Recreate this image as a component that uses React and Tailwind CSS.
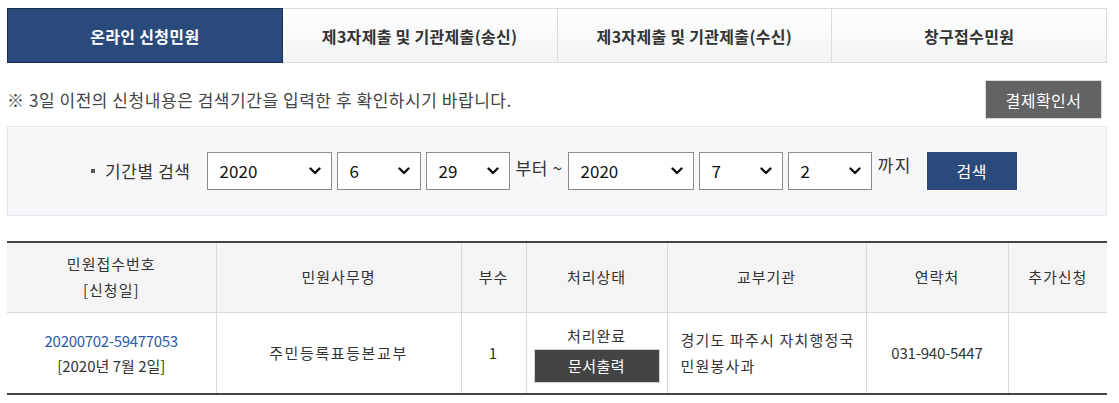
import React from "react";

const tabs = ["온라인 신청민원", "제3자제출 및 기관제출(송신)", "제3자제출 및 기관제출(수신)", "창구접수민원"];

const Chevron = () => (
    <svg className="absolute right-[10px] top-1/2 -translate-y-1/2 pointer-events-none" width="12" height="8" viewBox="0 0 12 8">
        <path d="M1.5 1.5 L6 6 L10.5 1.5" fill="none" stroke="#111" strokeWidth="2.4" strokeLinecap="round" strokeLinejoin="round" />
    </svg>
);

const DateSelect = ({ value, options, width }) => (
    <div className={`relative h-[38px] border border-[#8c8c8c] bg-white ${width}`}>
        <select
            defaultValue={value}
            className="appearance-none w-full h-full pl-[12px] pr-[28px] bg-transparent text-[17px] text-[#111] outline-none"
        >
            {options.map((o) => (
                <option key={o} value={o}>{o}</option>
            ))}
        </select>
        <Chevron />
    </div>
);

const years = ["2018", "2019", "2020"];
const months = Array.from({ length: 12 }, (_, i) => String(i + 1));
const days = Array.from({ length: 31 }, (_, i) => String(i + 1));

const App = () => {
    return (
        <div className="w-[1119px] h-[403px] bg-white text-[#333] overflow-hidden" style={{ fontFamily: '"Noto Sans CJK KR", "Noto Sans", sans-serif' }}>
            <div className="ml-[7px] w-[1100px] pt-[8px]">

                {/* tabs */}
                <div className="flex h-[55px]">
                    {tabs.map((t, i) => (
                        <div
                            key={t}
                            className={
                                i === 0
                                    ? "flex-1 flex items-center justify-center bg-[#2a4a7c] border border-[#1b2f52] text-white text-[16px] font-bold tracking-[0.3px]"
                                    : "flex-1 flex items-center justify-center bg-gradient-to-b from-white to-[#f2f3f4] border border-l-0 border-[#dcdcdc] text-[#333] text-[16px] font-bold tracking-[0.3px]"
                            }
                        >
                            {t}
                        </div>
                    ))}
                </div>

                {/* notice */}
                <div className="flex items-center justify-between mt-[17px] h-[39px]">
                    <p className="text-[17px] tracking-[0.55px] text-[#444] leading-[20px]">※ 3일 이전의 신청내용은 검색기간을 입력한 후 확인하시기 바랍니다.</p>
                    <button className="mr-[5px] w-[117px] h-[39px] bg-[#636363] border border-[#d9d9d9] text-white text-[16px] tracking-[0.5px]">결제확인서</button>
                </div>

                {/* search box */}
                <div className="mt-[7px] h-[90px] bg-[#f7f7f9] border border-[#e6e6ec] flex items-center pl-[83px]">
                    <span className="w-[4px] h-[4px] bg-[#555] mr-[10px]"></span>
                    <span className="text-[17px] tracking-[0.6px] text-[#333] mr-[16px]">기간별 검색</span>
                    <div className="flex items-center gap-[5px]">
                        <DateSelect value="2020" options={years} width="w-[125px]" />
                        <DateSelect value="6" options={months} width="w-[84px]" />
                        <DateSelect value="29" options={days} width="w-[84px]" />
                        <span className="text-[17px] tracking-[0.6px] text-[#333] -mt-[6px] ml-[1px]">부터 ~</span>
                        <DateSelect value="2020" options={years} width="w-[126px]" />
                        <DateSelect value="7" options={months} width="w-[84px]" />
                        <DateSelect value="2" options={days} width="w-[84px]" />
                        <span className="text-[17px] tracking-[1.5px] text-[#333] -mt-[12px] ml-[1px]">까지</span>
                        <button className="ml-[10px] w-[90px] h-[38px] bg-[#2a4a7c] text-white text-[16px] tracking-[0.5px]">검색</button>
                    </div>
                </div>

                {/* result table */}
                <table className="mt-[25px] w-[1100px] table-fixed border-collapse border-t-2 border-b-2 border-[#444] text-[15px] tracking-[1px] text-[#333]">
                    <colgroup>
                        <col className="w-[209px]" />
                        <col className="w-[245px]" />
                        <col className="w-[65px]" />
                        <col className="w-[141px]" />
                        <col className="w-[199px]" />
                        <col className="w-[142px]" />
                        <col className="w-[99px]" />
                    </colgroup>
                    <thead>
                        <tr className="h-[70px] bg-[#f4f4f4] border-b border-[#d9d9d9]">
                            <th className="font-normal leading-[26px]">민원접수번호<br />[신청일]</th>
                            <th className="font-normal border-l border-[#d9d9d9]">민원사무명</th>
                            <th className="font-normal border-l border-[#d9d9d9]">부수</th>
                            <th className="font-normal border-l border-[#d9d9d9]">처리상태</th>
                            <th className="font-normal border-l border-[#d9d9d9]">교부기관</th>
                            <th className="font-normal border-l border-[#d9d9d9]">연락처</th>
                            <th className="font-normal border-l border-[#d9d9d9]">추가신청</th>
                        </tr>
                    </thead>
                    <tbody>
                        <tr className="h-[82px]">
                            <td className="text-center leading-[25px]">
                                <a className="text-[#2b5ba6] tracking-[-0.3px]">20200702-59477053</a><br /><span className="tracking-[0px]">[2020년 7월 2일]</span>
                            </td>
                            <td className="text-center tracking-[1.6px] border-l border-[#d9d9d9]">주민등록표등본교부</td>
                            <td className="text-center border-l border-[#d9d9d9]">1</td>
                            <td className="text-center border-l border-[#d9d9d9]">
                                <div className="flex flex-col items-center pt-[2px]">
                                    <span className="leading-[24px]">처리완료</span>
                                    <button className="mt-[1px] w-[126px] h-[34px] bg-[#444] border border-[#d0d0d0] text-white text-[15px] tracking-[0.5px]">문서출력</button>
                                </div>
                            </td>
                            <td className="text-left pl-[13px] leading-[26px] tracking-[1.2px] border-l border-[#d9d9d9]">경기도 파주시 자치행정국<br />민원봉사과</td>
                            <td className="text-center tracking-[-0.2px] border-l border-[#d9d9d9]">031-940-5447</td>
                            <td className="text-center border-l border-[#d9d9d9]"></td>
                        </tr>
                    </tbody>
                </table>
            </div>
        </div>
    );
};

export default App;
